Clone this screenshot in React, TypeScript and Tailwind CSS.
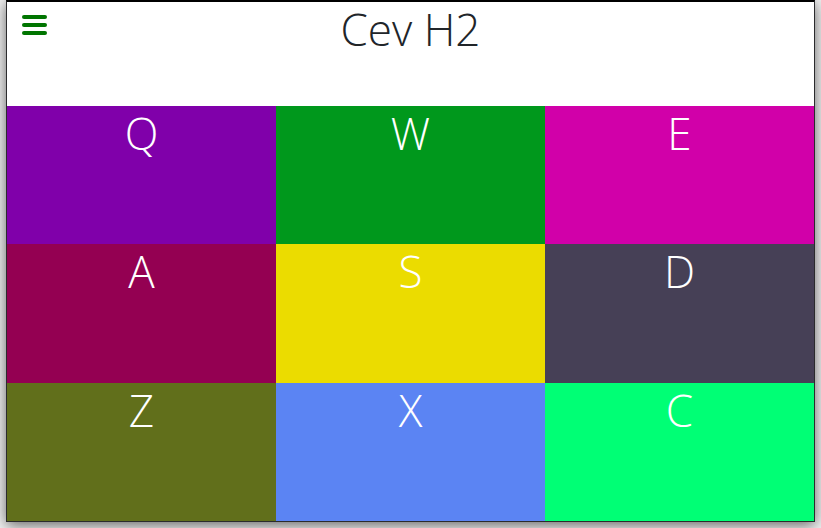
const tiles = [
  { letter: "Q", color: "bg-[#8000aa]" },
  { letter: "W", color: "bg-[#00981c]" },
  { letter: "E", color: "bg-[#d100a9]" },
  { letter: "A", color: "bg-[#940052]" },
  { letter: "S", color: "bg-[#ebdc00]" },
  { letter: "D", color: "bg-[#464056]" },
  { letter: "Z", color: "bg-[#616f1b]" },
  { letter: "X", color: "bg-[#5b84f3]" },
  { letter: "C", color: "bg-[#00ff75]" },
];

export default function App() {
  return (
    <div className="flex h-screen flex-col bg-[#f2f2f2] px-1.5 pb-1.5 font-['Open_Sans','Noto_Sans',sans-serif] text-[44px] leading-[54px] font-[350]">
      <main className="flex flex-1 flex-col border border-t-2 border-[#2b2b2d] border-t-black bg-white shadow-[0_3px_14px_rgba(0,0,0,0.6)]">
        <header className="grid h-[104px] shrink-0 grid-cols-[1fr_auto_1fr] items-start">
          <button
            type="button"
            aria-label="Menu"
            className="mt-[13px] ml-[15px] flex w-[25px] flex-col gap-1"
          >
            <span className="h-1 w-full rounded-full bg-[#007500]" />
            <span className="h-1 w-full rounded-full bg-[#007500]" />
            <span className="h-1 w-full rounded-full bg-[#007500]" />
          </button>
          <h1 className="text-[#212529] font-[350]">Cev H2</h1>
        </header>
        <div className="grid flex-1 grid-cols-3 grid-rows-3">
          {tiles.map(({ letter, color }) => (
            <button
              key={letter}
              type="button"
              className={`flex items-start justify-center text-white ${color}`}
            >
              {letter}
            </button>
          ))}
        </div>
      </main>
    </div>
  );
}
